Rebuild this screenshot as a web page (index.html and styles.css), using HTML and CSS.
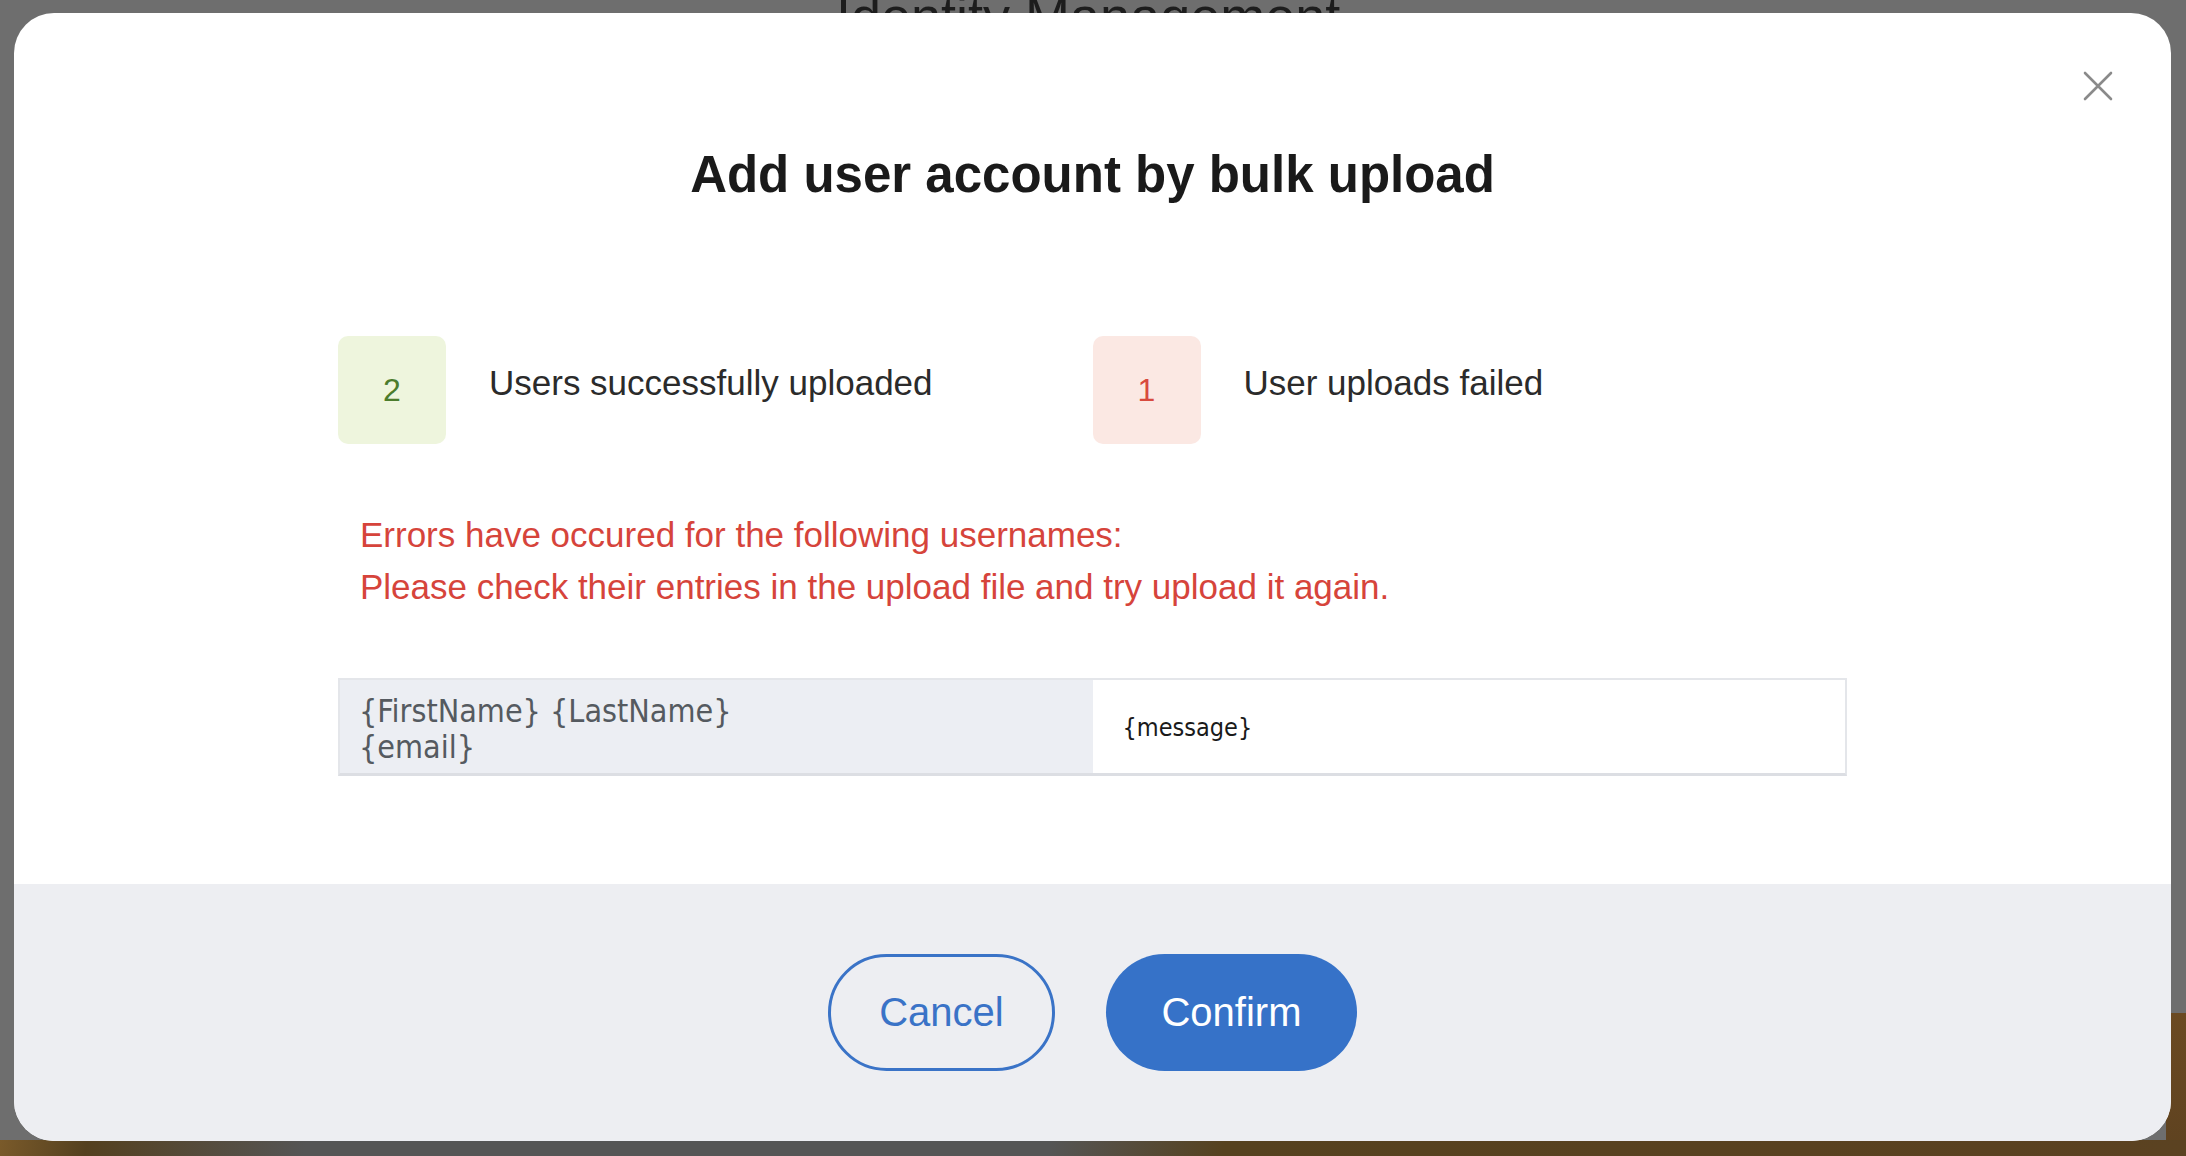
FILE: index.html
```html
<!DOCTYPE html>
<html lang="en">
<head>
<meta charset="utf-8">
<title>Add user account by bulk upload</title>
<link rel="stylesheet" href="styles.css">
</head>
<body>
<div class="page-bg">
  <div class="bg-title">Identity Management</div>
  <div class="bg-right"></div>
  <div class="bg-bottom"></div>
</div>
<div class="modal">
  <button class="close" aria-label="Close">
    <svg viewBox="0 0 30 30" width="30" height="30"><path d="M2 2 L28 28 M28 2 L2 28" stroke="#8a8a8a" stroke-width="2.6" stroke-linecap="round" fill="none"/></svg>
  </button>
  <div class="modal-body">
    <h1 class="title">Add user account by bulk upload</h1>
    <div class="stats">
      <div class="stat">
        <div class="stat-count stat-ok">2</div>
        <div class="stat-label">Users successfully uploaded</div>
      </div>
      <div class="stat">
        <div class="stat-count stat-fail">1</div>
        <div class="stat-label">User uploads failed</div>
      </div>
    </div>
    <div class="errors">
      <p>Errors have occured for the following usernames:</p>
      <p>Please check their entries in the upload file and try upload it again.</p>
    </div>
    <div class="error-table">
      <div class="cell cell-name">
        <div>{FirstName} {LastName}</div>
        <div>{email}</div>
      </div>
      <div class="cell cell-msg">{message}</div>
    </div>
  </div>
  <div class="modal-footer">
    <button class="btn btn-outline">Cancel</button>
    <button class="btn btn-primary">Confirm</button>
  </div>
</div>
</body>
</html>
```
FILE: styles.css
```css
* { box-sizing: border-box; }

html, body { margin: 0; }

body {
  position: relative;
  height: 1156px;
  overflow: hidden;
  padding: 13px 15px 15px 14px;
  background: #6e6e6e;
  font-family: "Liberation Sans", Arial, sans-serif;
}

.page-bg {
  position: absolute;
  inset: 0;
  z-index: 0;
}

.bg-title {
  position: absolute;
  left: 836px;
  top: -11px;
  font-size: 54px;
  line-height: 54px;
  color: #1d1d1d;
  white-space: nowrap;
}

.bg-right {
  position: absolute;
  right: 0;
  top: 1013px;
  width: 20px;
  bottom: 0;
  background: linear-gradient(to bottom, #6b4a22, #5e4220);
}

.bg-bottom {
  position: absolute;
  left: 0;
  right: 0;
  bottom: 0;
  height: 16px;
  background: linear-gradient(100deg, #7a5a2a 0%, #54401f 4%, #555555 14%, #555555 48%, #56421f 56%, #5b4221 100%);
}

.modal {
  position: relative;
  z-index: 1;
  height: 1128px;
  background: #ffffff;
  border-radius: 40px;
  overflow: hidden;
  display: flex;
  flex-direction: column;
}

.close {
  position: absolute;
  top: 58px;
  right: 58px;
  width: 30px;
  height: 30px;
  padding: 0;
  border: 0;
  background: transparent;
  display: flex;
}

.modal-body {
  flex: 1;
  display: flex;
  flex-direction: column;
  align-items: center;
  padding-top: 132px;
}

.title {
  margin: 0;
  font-size: 51px;
  line-height: 60px;
  font-weight: 700;
  color: #1a1a1a;
}

.stats {
  margin-top: 131px;
  width: 1509px;
  display: grid;
  grid-template-columns: 1fr 1fr;
}

.stat {
  display: flex;
  align-items: flex-start;
  gap: 43px;
}

.stat-count {
  width: 108px;
  height: 108px;
  border-radius: 10px;
  display: flex;
  align-items: center;
  justify-content: center;
  font-size: 32px;
}

.stat-ok { background: #eef5dd; color: #4b7c2c; }
.stat-fail { background: #fbe8e3; color: #d84a3e; }

.stat-label {
  padding-top: 25px;
  font-size: 35px;
  line-height: 44px;
  color: #2b2b2b;
}

.errors {
  margin-top: 65px;
  width: 1509px;
  padding-left: 22px;
  color: #d6443b;
  font-size: 35px;
  line-height: 52px;
}

.errors p { margin: 0; }

.error-table {
  margin-top: 65px;
  width: 1509px;
  height: 98px;
  display: grid;
  grid-template-columns: 1fr 1fr;
  border: 2px solid #e4e6ea;
  border-bottom: 3px solid #dcdee3;
}

.cell {
  display: flex;
  flex-direction: column;
  justify-content: center;
}

.cell-name {
  background: #eceef3;
  padding-left: 19px;
  padding-top: 4px;
  font-family: "DejaVu Sans Condensed", "DejaVu Sans", sans-serif;
  font-stretch: condensed;
  font-size: 32px;
  line-height: 36px;
  color: #555a60;
}

.cell-msg {
  background: #ffffff;
  padding-left: 30px;
  padding-top: 2px;
  font-family: "DejaVu Sans Condensed", "DejaVu Sans", sans-serif;
  font-stretch: condensed;
  font-size: 25px;
  color: #1a1a1a;
}

.modal-footer {
  height: 257px;
  background: #edeef2;
  display: flex;
  align-items: center;
  justify-content: center;
  gap: 51px;
}

.btn {
  height: 117px;
  border-radius: 59px;
  font-family: "Liberation Sans", Arial, sans-serif;
  font-size: 40px;
  padding: 0;
  cursor: pointer;
}

.btn-outline {
  width: 227px;
  border: 3px solid #3a73c7;
  background: transparent;
  color: #3a73c7;
}

.btn-primary {
  width: 251px;
  border: 0;
  background: #3672c8;
  color: #ffffff;
}
```
